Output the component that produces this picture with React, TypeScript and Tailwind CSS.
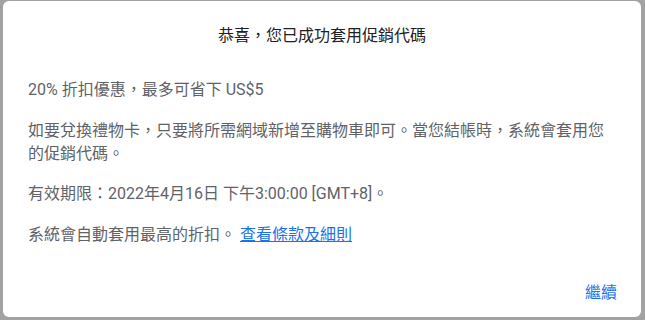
export default function App() {
  return (
    <div
      className="h-[320px] w-[645px] bg-[#a2a2a2] pl-[3px] pr-[4px] pt-[1px] pb-[3px]"
      style={{ fontFamily: 'Roboto, "Noto Sans CJK TC", sans-serif' }}
    >
      <div className="flex h-full flex-col rounded-[6px] bg-white">
        <h2 className="pt-[23px] text-center text-[16px] font-normal leading-6 text-[#202124]">
          恭喜，您已成功套用促銷代碼
        </h2>
        <div className="mt-[30px] flex flex-col gap-[17px] pl-[25px] pr-6 text-[16px] leading-6 text-[#5f6368]">
          <p>20% 折扣優惠，最多可省下 US$5</p>
          <p className="leading-[23px]">如要兌換禮物卡，只要將所需網域新增至購物車即可。當您結帳時，系統會套用您的促銷代碼。</p>
          <p>有效期限：2022年4月16日 下午3:00:00 [GMT+8]。</p>
          <p>
            系統會自動套用最高的折扣。{' '}
            <a href="#" className="text-[#1a73e8] underline">
              查看條款及細則
            </a>
          </p>
        </div>
        <div className="mt-auto flex justify-end px-4 pb-[6px]">
          <button className="h-9 px-2 text-[16px] font-normal text-[#1a73e8]">繼續</button>
        </div>
      </div>
    </div>
  );
}
